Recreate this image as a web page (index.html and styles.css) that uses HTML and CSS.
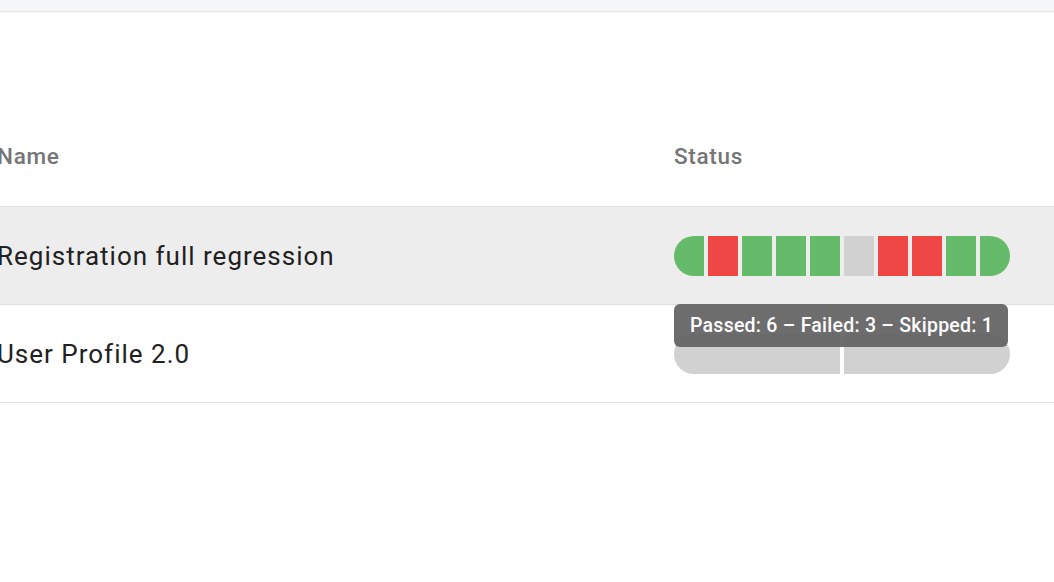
FILE: index.html
```html
<!DOCTYPE html>
<html lang="en">
<head>
<meta charset="utf-8">
<title>Test runs</title>
<link rel="stylesheet" href="styles.css">
</head>
<body>
<div class="topbar"></div>
<div class="table">
  <div class="row head">
    <div class="cell name">Name</div>
    <div class="cell status">Status</div>
  </div>
  <div class="row hover">
    <div class="cell name">Registration full regression</div>
    <div class="cell status">
      <div class="bar-wrap">
        <div class="bar">
          <span class="seg pass"></span>
          <span class="seg fail"></span>
          <span class="seg pass"></span>
          <span class="seg pass"></span>
          <span class="seg pass"></span>
          <span class="seg skip"></span>
          <span class="seg fail"></span>
          <span class="seg fail"></span>
          <span class="seg pass"></span>
          <span class="seg pass"></span>
        </div>
        <div class="tooltip">Passed: 6 – Failed: 3 – Skipped: 1</div>
      </div>
    </div>
  </div>
  <div class="row">
    <div class="cell name">User Profile 2.0</div>
    <div class="cell status">
      <div class="bar">
        <span class="seg skip"></span>
        <span class="seg skip"></span>
      </div>
    </div>
  </div>
</div>
</body>
</html>
```
FILE: styles.css
```css
html, body {
  margin: 0;
  padding: 0;
  background: #ffffff;
  font-family: Roboto, "Liberation Sans", Arial, sans-serif;
  overflow: hidden;
}

.topbar {
  height: 11px;
  background: #f5f6f8;
  border-bottom: 1px solid #e4e5e7;
  box-shadow: 0 1px 1px rgba(0, 0, 0, 0.03);
}

.table {
  margin-top: 97px;
  margin-left: -3px;
}

.row {
  display: flex;
  align-items: center;
  height: 97px;
  border-bottom: 1px solid #e0e0e0;
}

.row.hover {
  background: #ededed;
}

.cell.name {
  width: 677px;
  font-size: 26px;
  letter-spacing: 1px;
  color: #212121;
}

.cell.status {
  flex: 1;
}

.row.head .cell {
  font-size: 22.5px;
  letter-spacing: 0.7px;
  font-weight: 500;
  color: #757575;
  padding-bottom: 4px;
}

.bar-wrap {
  position: relative;
  width: 336px;
}

.bar {
  display: flex;
  gap: 4px;
  width: 336px;
  height: 40px;
  border-radius: 20px;
  overflow: hidden;
}

.seg {
  flex: 1;
  height: 100%;
}

.seg.pass { background: #66bb6a; }
.seg.fail { background: #ef4646; }
.seg.skip { background: #d1d1d1; }

.tooltip {
  position: absolute;
  top: 68px;
  left: 0;
  box-sizing: border-box;
  width: 334px;
  height: 43px;
  padding: 0 16px;
  display: flex;
  align-items: center;
  background: rgba(97, 97, 97, 0.92);
  color: #ffffff;
  border-radius: 6px;
  font-size: 19.5px;
  letter-spacing: 0.25px;
  font-weight: 500;
  white-space: nowrap;
  z-index: 2;
}
```
